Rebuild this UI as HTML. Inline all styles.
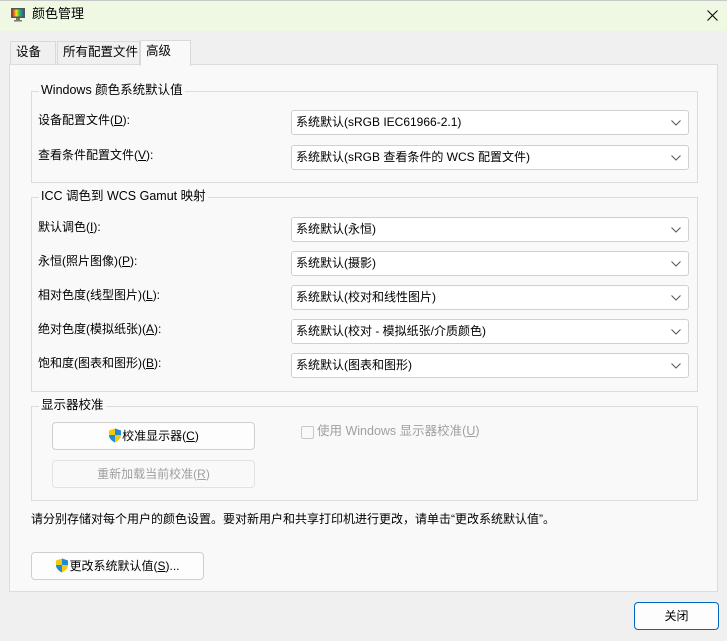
<!DOCTYPE html>
<html><head><meta charset="utf-8"><style>
*{box-sizing:border-box;margin:0;padding:0}
body{width:727px;height:641px;background:#f0f0f0;font-family:"Liberation Sans","Noto Sans CJK SC",sans-serif;font-size:12px;line-height:1.2;color:#000;position:relative;overflow:hidden}
.a{position:absolute}
.title{left:0;top:0;width:727px;height:31px;background:#eff8e3;border-top:1px solid #c8c8c8}
.tab{position:absolute;top:41px;height:24px;border:1px solid #d9d9d9;border-bottom:none;background:#f0f0f0;padding:0 0 0 5px;line-height:20px;font-size:12.5px}
.panel{left:9px;top:64px;width:709px;height:528px;background:#f9f9f9;border:1px solid #dcdcdc}
.grp{position:absolute;border:1px solid #dcdcdc}
.gl{position:absolute;top:-9px;left:7px;background:#f9f9f9;padding:0 2px;font-size:12.5px}
.lbl{position:absolute;left:38px;font-size:12px}
.cb{position:absolute;left:291px;width:398px;height:25px;background:#fff;border:1px solid #d0d0d0;border-radius:3px;padding:0 0 0 4px;line-height:23px;font-size:12px}
.cb svg{position:absolute;right:7px;top:9px}
.btn{position:absolute;background:#fdfdfd;border:1px solid #cfcfcf;border-radius:4px;text-align:center;font-size:12px;line-height:26px}
u{text-decoration:underline}
</style></head><body>
<div class="a title"></div>
<svg class="a" style="left:10px;top:7px" width="16" height="16" viewBox="0 0 16 16"><rect x="1" y="1" width="14" height="10" fill="#555"/><rect x="2.5" y="2.5" width="11" height="7" fill="url(#g)"/><defs><linearGradient id="g"><stop offset="0" stop-color="#e02020"/><stop offset=".35" stop-color="#f0e020"/><stop offset=".65" stop-color="#20c040"/><stop offset="1" stop-color="#3050e0"/></linearGradient></defs><rect x="6" y="11" width="4" height="2" fill="#777"/><rect x="4" y="13" width="8" height="1.5" fill="#777"/></svg>
<div class="a" style="left:32px;top:6px;font-size:13px">颜色管理</div>
<svg class="a" style="left:707px;top:10px" width="11" height="11" viewBox="0 0 11 11"><path d="M0.5 0.5L10.5 10.5M10.5 0.5L0.5 10.5" stroke="#000" stroke-width="1"/></svg>
<div class="tab" style="left:10px;width:46px">设备</div>
<div class="tab" style="left:57px;width:83px">所有配置文件</div>
<div class="a panel"></div>
<div class="tab" style="left:140px;top:40px;width:51px;height:26px;background:#f9f9f9;z-index:2">高级</div>
<div class="grp" style="left:31px;top:91px;width:667px;height:92px"><div class="gl">Windows 颜色系统默认值</div></div>
<div class="grp" style="left:31px;top:197px;width:667px;height:195px"><div class="gl">ICC 调色到 WCS Gamut 映射</div></div>
<div class="grp" style="left:31px;top:406px;width:667px;height:95px"><div class="gl">显示器校准</div></div>
<div class="lbl" style="top:113px">设备配置文件(<u>D</u>):</div>
<div class="lbl" style="top:148px">查看条件配置文件(<u>V</u>):</div>
<div class="lbl" style="top:220px">默认调色(<u>I</u>):</div>
<div class="lbl" style="top:254px">永恒(照片图像)(<u>P</u>):</div>
<div class="lbl" style="top:288px">相对色度(线型图片)(<u>L</u>):</div>
<div class="lbl" style="top:322px">绝对色度(模拟纸张)(<u>A</u>):</div>
<div class="lbl" style="top:356px">饱和度(图表和图形)(<u>B</u>):</div>
<div class="cb" style="top:110px">系统默认(sRGB IEC61966-2.1)<svg width="10" height="6"><path d="M0.5 0.5L5 5L9.5 0.5" fill="none" stroke="#555"/></svg></div>
<div class="cb" style="top:145px">系统默认(sRGB 查看条件的 WCS 配置文件)<svg width="10" height="6"><path d="M0.5 0.5L5 5L9.5 0.5" fill="none" stroke="#555"/></svg></div>
<div class="cb" style="top:217px">系统默认(永恒)<svg width="10" height="6"><path d="M0.5 0.5L5 5L9.5 0.5" fill="none" stroke="#555"/></svg></div>
<div class="cb" style="top:251px">系统默认(摄影)<svg width="10" height="6"><path d="M0.5 0.5L5 5L9.5 0.5" fill="none" stroke="#555"/></svg></div>
<div class="cb" style="top:285px">系统默认(校对和线性图片)<svg width="10" height="6"><path d="M0.5 0.5L5 5L9.5 0.5" fill="none" stroke="#555"/></svg></div>
<div class="cb" style="top:319px">系统默认(校对 - 模拟纸张/介质颜色)<svg width="10" height="6"><path d="M0.5 0.5L5 5L9.5 0.5" fill="none" stroke="#555"/></svg></div>
<div class="cb" style="top:353px">系统默认(图表和图形)<svg width="10" height="6"><path d="M0.5 0.5L5 5L9.5 0.5" fill="none" stroke="#555"/></svg></div>
<div class="btn" style="left:52px;top:422px;width:203px;height:28px"><svg width="14" height="15" viewBox="0 0 14 15" style="vertical-align:-3px"><path d="M7 0.5L13 2.5V7C13 10.5 10 13 7 14.5C4 13 1 10.5 1 7V2.5Z" fill="#f2c811"/><path d="M7 0.5L13 2.5V7H7ZM7 7V14.5C4 13 1 10.5 1 7Z" fill="#1f8ad8"/></svg>校准显示器(<u>C</u>)</div>
<div class="btn" style="left:52px;top:460px;width:203px;height:28px;color:#a0a0a0;border-color:#e2e2e2;background:#f9f9f9">重新加载当前校准(<u>R</u>)</div>
<div class="a" style="left:301px;top:426px;width:13px;height:13px;border:1px solid #c8c8c8;border-radius:2px"></div>
<div class="a" style="left:317px;top:424px;color:#a0a0a0;font-size:12.5px">使用 Windows 显示器校准(<u>U</u>)</div>
<div class="a" style="left:31px;top:512px;font-size:12px">请分别存储对每个用户的颜色设置。要对新用户和共享打印机进行更改，请单击“更改系统默认值”。</div>
<div class="btn" style="left:31px;top:552px;width:173px;height:28px"><svg width="14" height="15" viewBox="0 0 14 15" style="vertical-align:-3px"><path d="M7 0.5L13 2.5V7C13 10.5 10 13 7 14.5C4 13 1 10.5 1 7V2.5Z" fill="#f2c811"/><path d="M7 0.5L13 2.5V7H7ZM7 7V14.5C4 13 1 10.5 1 7Z" fill="#1f8ad8"/></svg>更改系统默认值(<u>S</u>)...</div>
<div class="btn" style="left:634px;top:602px;width:85px;height:28px;border:1px solid #0067c0;background:#fdfdfd">关闭</div>
</body></html>
